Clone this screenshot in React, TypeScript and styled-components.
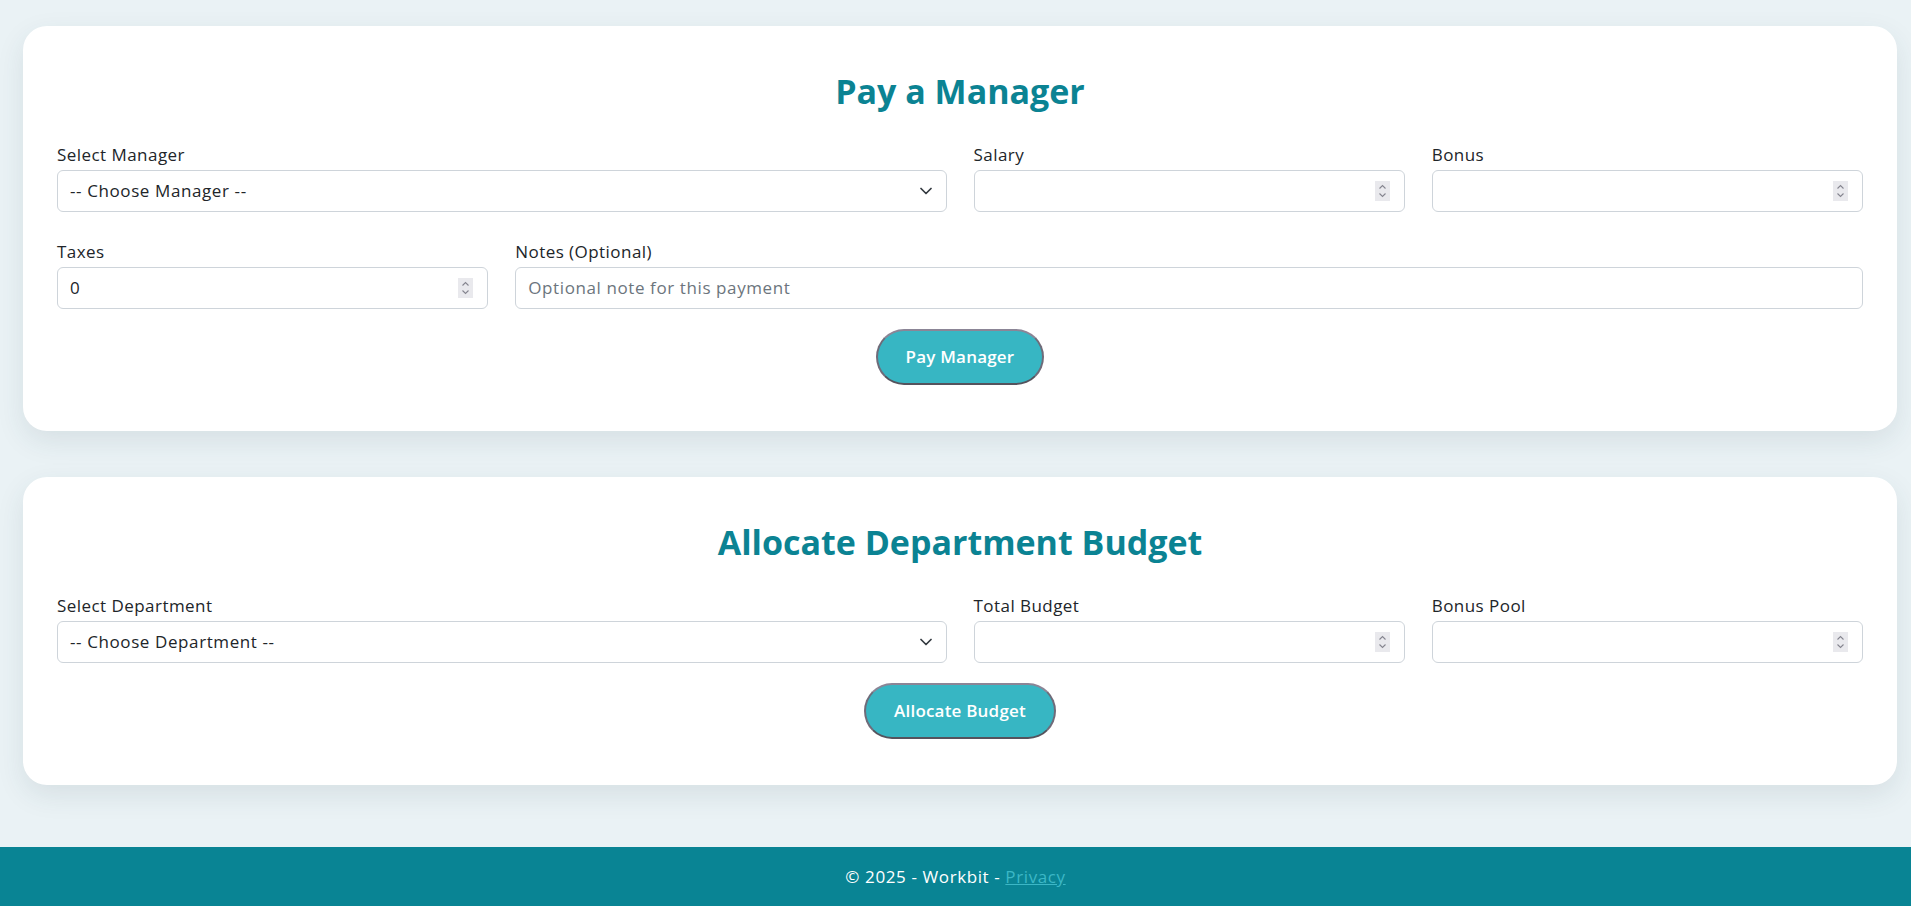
import React from "react";
import styled, { createGlobalStyle } from "styled-components";

const GlobalStyle = createGlobalStyle`
  html, body {
    margin: 0;
    padding: 0;
  }
  body {
    background: #eaf2f5;
    font-family: "Open Sans", "Noto Sans", sans-serif;
    color: #212529;
  }
  * { box-sizing: border-box; }
`;

const Page = styled.div`
  min-height: 906px;
  display: flex;
  flex-direction: column;
`;

const Main = styled.main`
  flex: 1;
  display: flex;
  flex-direction: column;
  gap: 46px;
  padding: 26px 14px 61px 23px;
`;

const Card = styled.section`
  background: #ffffff;
  border-radius: 24px;
  box-shadow: 0 10px 28px rgba(40, 70, 80, 0.1);
  padding: 44px 34px 46px;
`;

const Title = styled.h2`
  margin: 0 0 31px;
  text-align: center;
  color: #0b8393;
  font-size: 34px;
  line-height: 42px;
  font-weight: 700;
`;

const Grid = styled.div`
  display: grid;
  grid-template-columns: repeat(4, 1fr);
  column-gap: 27px;
  row-gap: 28px;
`;

const Field = styled.div<{ $span: number }>`
  grid-column: span ${(p) => p.$span};
  display: flex;
  flex-direction: column;
  min-width: 0;
`;

const Label = styled.label`
  font-size: 17px;
  line-height: 24px;
  margin-bottom: 3px;
  color: #212529;
  letter-spacing: 0.45px;
`;

const Box = styled.div`
  height: 42px;
  border: 1px solid #ced4da;
  border-radius: 6px;
  background: #fff;
  display: flex;
  align-items: center;
  padding: 0 14px 0 12px;
  gap: 8px;
`;

const TextInput = styled.input`
  flex: 1;
  min-width: 0;
  border: none;
  outline: none;
  padding: 0;
  background: transparent;
  font: inherit;
  font-size: 17px;
  line-height: 24px;
  letter-spacing: 0.6px;
  color: #212529;
  &::placeholder {
    color: #6c757d;
  }
  &::-webkit-inner-spin-button,
  &::-webkit-outer-spin-button {
    -webkit-appearance: none;
    margin: 0;
  }
`;

const Select = styled.select`
  flex: 1;
  min-width: 0;
  border: none;
  outline: none;
  padding: 0;
  background: transparent;
  appearance: none;
  font: inherit;
  font-size: 17px;
  line-height: 24px;
  letter-spacing: 0.6px;
  color: #212529;
`;

const Actions = styled.div`
  display: flex;
  justify-content: center;
  margin-top: 20px;
`;

const Button = styled.button`
  background: #37b6c3;
  color: #ffffff;
  font-family: inherit;
  font-size: 17px;
  font-weight: 600;
  line-height: 24px;
  letter-spacing: 0.2px;
  padding: 14px 28px;
  border: 2px solid;
  border-color: #8b8596 #6f6b79 #55535d #6f6b79;
  border-radius: 999px;
  cursor: pointer;
`;

const Footer = styled.footer`
  height: 59px;
  background: #098494;
  color: #ffffff;
  display: flex;
  align-items: center;
  justify-content: center;
  font-size: 17px;
  letter-spacing: 0.6px;
`;

const FooterLink = styled.a`
  color: #3cb7c6;
  text-decoration: underline;
  margin-left: 5px;
`;

const Spinner = () => (
  <svg width="15" height="20" viewBox="0 0 15 20" aria-hidden="true">
    <rect width="15" height="20" fill="#e9e9ed" />
    <path d="M4.5 7.5 L7.5 4.5 L10.5 7.5" fill="none" stroke="#85858f" strokeWidth="1.1" />
    <path d="M4.5 12.5 L7.5 15.5 L10.5 12.5" fill="none" stroke="#85858f" strokeWidth="1.1" />
  </svg>
);

const Chevron = () => (
  <svg width="12" height="8" viewBox="0 0 12 8" aria-hidden="true">
    <path d="M1 1.5 L6 6.5 L11 1.5" fill="none" stroke="#343a40" strokeWidth="1.7" strokeLinecap="round" strokeLinejoin="round" />
  </svg>
);

const NumberField = ({ label, span, value }: { label: string; span: number; value?: string }) => (
  <Field $span={span}>
    <Label>{label}</Label>
    <Box>
      <TextInput type="number" defaultValue={value} />
      <Spinner />
    </Box>
  </Field>
);

const SelectField = ({ label, option }: { label: string; option: string }) => (
  <Field $span={2}>
    <Label>{label}</Label>
    <Box>
      <Select defaultValue="">
        <option value="">{option}</option>
      </Select>
      <Chevron />
    </Box>
  </Field>
);

export default function App() {
  return (
    <Page>
      <GlobalStyle />
      <Main>
        <Card>
          <Title>Pay a Manager</Title>
          <Grid>
            <SelectField label="Select Manager" option="-- Choose Manager --" />
            <NumberField label="Salary" span={1} />
            <NumberField label="Bonus" span={1} />
            <NumberField label="Taxes" span={1} value="0" />
            <Field $span={3}>
              <Label>Notes (Optional)</Label>
              <Box>
                <TextInput type="text" placeholder="Optional note for this payment" />
              </Box>
            </Field>
          </Grid>
          <Actions>
            <Button>Pay Manager</Button>
          </Actions>
        </Card>
        <Card>
          <Title>Allocate Department Budget</Title>
          <Grid>
            <SelectField label="Select Department" option="-- Choose Department --" />
            <NumberField label="Total Budget" span={1} />
            <NumberField label="Bonus Pool" span={1} />
          </Grid>
          <Actions>
            <Button>Allocate Budget</Button>
          </Actions>
        </Card>
      </Main>
      <Footer>
        © 2025 - Workbit -<FooterLink href="#">Privacy</FooterLink>
      </Footer>
    </Page>
  );
}
